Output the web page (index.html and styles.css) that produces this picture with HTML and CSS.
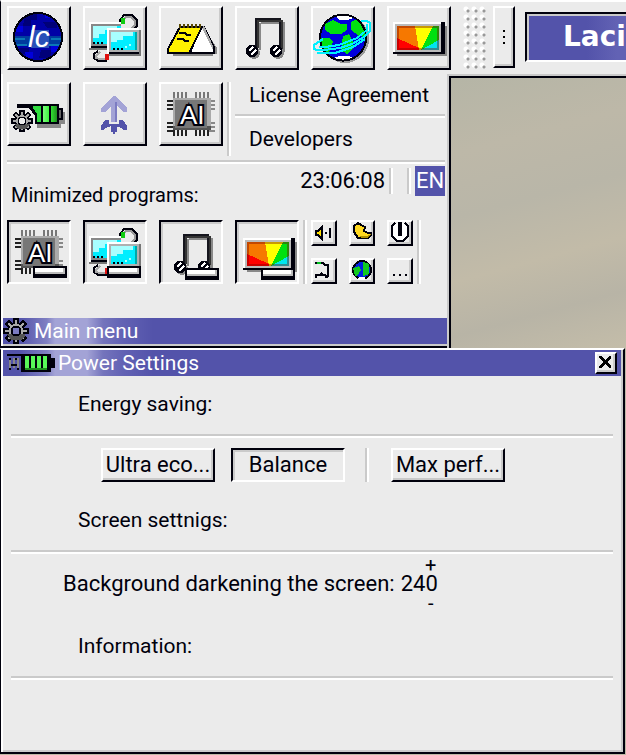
FILE: index.html
```html
<!DOCTYPE html>
<html lang="en">
<head>
<meta charset="utf-8">
<title>Main menu</title>
<link rel="stylesheet" href="styles.css">
</head>
<body>
<svg class="defs" aria-hidden="true">
  <defs>
    <linearGradient id="battery" x1="0" x2="1" y1="0" y2="0">
      <stop offset="0" stop-color="#7dff7d"/><stop offset=".5" stop-color="#35f035"/><stop offset="1" stop-color="#209020"/>
    </linearGradient>
    <clipPath id="disc"><circle cx="14.5" cy="14.5" r="12"/></clipPath>
    <clipPath id="earth"><circle cx="15" cy="14.8" r="11.5"/></clipPath>

    <symbol id="i-logo" viewBox="0 0 30 30">
      <g clip-path="url(#disc)">
        <path fill="#0000a6" d="M2 2h25v25H2z"/>
        <path fill="#000078" d="M8 3h6v3h-3v3H7zM17 7h7v3h-5zM5 20h5v3h-4zM16 21h5v4h-6z"/>
        <path fill="#0000dc" d="M4 9h3v3H3zM8 22h4v3H9zM21 19h4v3h-4zM18 3h3v2h-3z"/>
        <path fill="#003c9e" d="M2 14h25v5H2z"/>
        <path fill="#0a78b4" d="M2 15h6v1H2zM21 15h6v1h-6zM4 18h5v1H4zM20 18h5v1h-5z"/>
        <path fill="#2850b8" d="M11 11h9v9h-9z"/>
      </g>
      <circle cx="14.5" cy="14.5" r="12" fill="none" stroke="#00000c"/>
      <text class="logo-text" x="9.500" y="19.500">lc</text>
    </symbol>

    <symbol id="i-network" viewBox="0 0 30 30">
      <path fill="none" stroke="#00000c" d="M17.500 9V6l2-2.500h4l2.500 2.500v3l-2 2"/>
      <path fill="none" stroke="#999" d="M19 6l1.500-1.500h2.500l2 2v2l-2 2"/>
      <path fill="#fff" d="M2 7h16v13H2z"/>
      <path fill="#888" d="M3 8h15v11H3z"/>
      <path fill="#00eeff" d="M4 9h14v9H4z"/>
      <path fill="#a8ffff" d="M4 9h12v2H4zM4 11h6v2H4zM4 13h3v2H4z"/>
      <path fill="#00000c" d="M4 17h1v1H4zM6 17h1v1H6zM8 17h1v1H8zM3 19h9v1H3z"/>
      <path fill="#777" d="M2 20h9v1H2z"/>
      <path fill="none" stroke="#00000c" d="M6.500 21.500l-2 1.500v2l2 1.500h4l1-2"/>
      <path fill="none" stroke="#aaa" d="M7.500 22l-2 2v1l2 .5h3"/>
      <path fill="#e01010" d="M10 23h2v3h-2z"/>
      <path fill="#777" d="M12 11h16v13H12z"/>
      <path fill="#00000c" d="M12 22h15v1H12z"/>
      <path fill="#fff" d="M11 10h16v1H12v12h-1z"/>
      <path fill="#b0b0b0" d="M12 11h15v11H12z"/>
      <path fill="#00a8a8" d="M13 12h13v9H13z"/>
      <path fill="#00eeff" d="M13 12h12v9H13z"/>
      <path fill="#a8ffff" d="M13 12h11v2H13zM13 14h6v2h-6zM13 16h3v1h-3zM22 18h1v1h-1zM20 19h1v1h-1z"/>
      <path fill="#00000c" d="M14 20h1v1h-1zM16 20h1v1h-1zM18 20h1v1h-1z"/>
      <path fill="none" stroke="#00000c" d="M17.500 7V6l2-2.500"/>
      <path fill="#11cc11" d="M18 5h2v3h-2z"/>
    </symbol>

    <symbol id="i-notes" viewBox="0 0 30 30">
      <path fill="#888" d="M6 22h20v2H6zM22 11l6 9v3h-3z"/>
      <path fill="#fff" stroke="#00000c" d="M19.500 9.500h2l5 10v3h-12z"/>
      <path fill="#aaa" d="M20 9h1.500l4.500 10v2z"/>
      <path fill="#fff100" stroke="#00000c" d="M9.500 9.500h11L14 22.500H3.500v-2z"/>
      <path fill="none" stroke="#5c4a00" stroke-width="2" stroke-dasharray="1 1" d="M9 9h12"/>
      <path fill="none" stroke="#00000c" d="M9 12.500h3l1 1h2M8 15.500h3l1 1h2"/>
    </symbol>

    <symbol id="i-music" viewBox="0 0 30 30">
      <path fill="none" stroke="#888" stroke-width="1" d="M11.500 21V7.500M23.500 7v15M12 7.500h9"/>
      <path fill="none" stroke="#15151d" d="M9.500 21V5.500h12v15.500"/>
      <path fill="none" stroke="#333" d="M10 6.500h12M22.500 6v15M10.500 6v14"/>
      <g id="note-head">
        <ellipse cx="8.500" cy="22.500" rx="3" ry="3" fill="#888"/>
        <ellipse cx="7.500" cy="21.500" rx="3" ry="3.200" fill="#00000c"/>
        <path fill="none" stroke="#fff" d="M6 21.500l2-2M7 23.500l2.500-2.500"/>
      </g>
      <use href="#note-head" x="12"/>
    </symbol>

    <symbol id="i-globe" viewBox="0 0 30 30">
      <circle cx="16" cy="15.500" r="12" fill="#999"/>
      <g clip-path="url(#earth)">
        <path fill="#0000dd" d="M3 2h25v26H3z"/>
        <path fill="#fff" d="M10 2h10v3l-3 1h-4zM8 26l5-2h5l4 2v3H8z"/>
        <path fill="#00e010" d="M6 8l4-2 4 2h3v3l-3 2H9L6 11zM19 7l4-2 5 4v6l-5-1-4-3zM4 15h4l2 2-2 5H4zM15 14l3-1 2 4v3l-3 3-3-2z"/>
      </g>
      <circle cx="15" cy="14.800" r="11.500" fill="none" stroke="#00000c"/>
      <path fill="none" stroke="#00f0ff" d="M24 6.500h3l1.500 1v4l-3 3-6 3.500-6 2-8 1H2l-1.500-.5v-2L5 15.500M27 8v3l-5 4-9 3.500-7 1H3M2 22.500h9l9-3 6-4"/>
    </symbol>

    <symbol id="i-display" viewBox="0 0 30 30">
      <path fill="#888" d="M4 9h25v15H4z"/>
      <path fill="#00000c" d="M3 7h25v16H2v-1z"/>
      <path fill="#fff" d="M2 7h24v15H2z"/>
      <path fill="#bbb" d="M3 8h23v14H3z"/>
      <path fill="#f67800" d="M4 9h21v12H4z"/>
      <path fill="#f00" d="M4 15l11 5v1H4z"/>
      <path fill="#ff0" d="M13 9h9l-6 12h-1z"/>
      <path fill="#00e010" d="M22 9h3v7l-9 5z"/>
      <path fill="#00e5ee" d="M25 16v5h-9z"/>
      <path fill="none" stroke="#780000" stroke-opacity=".4" d="M4 20.500h21M4.500 9v12M4 9.500h21M24.500 9v12"/>
    </symbol>

    <symbol id="i-gear" viewBox="0 0 13 13">
      <path fill="#aaa" stroke="#00000c" d="M5.500.5h2v2l1 .5L10 1.500 11.500 3 10 4.500l.5 1h2v2h-2l-.5 1 1.500 1.500L10 11.500 8.500 10l-1 .5v2h-2v-2l-1-.5L3 11.500 1.500 10 3 8.500l-.5-1h-2v-2h2l.5-1L1.500 3 3 1.500 4.500 3l1-.5z"/>
      <path fill="#555" d="M2 8h9v1L9 11H4z"/>
      <circle class="hub" cx="6.500" cy="6.500" r="2.200" stroke="#00000c"/>
    </symbol>

    <symbol id="i-power" viewBox="0 0 30 30">
      <path fill="#888" d="M14 14h14v6h-2v2H14z"/>
      <path fill="#00000c" d="M4 10h21v2h2v6h-2v2H13v-4l-3-4H4z"/>
      <path fill="#30dc40" d="M12 11h4v8h-2v-4l-2-3z"/>
      <path fill="url(#battery)" d="M17 11h3v8h-3zM21 11h3v8h-3z"/>
      <path fill="#666" d="M25 13h1v4h-1z"/>
      <use href="#i-gear" x="1" y="13" width="11" height="11"/>
    </symbol>

    <symbol id="i-arrow" viewBox="0 0 30 30">
      <path fill="#a3a3d6" d="M14 6h1l6 6v2h-2l-3-3v8h-3v-8l-3 3H8v-2z"/>
      <path fill="#7c7cc2" d="M15 9h1v10h-1z"/>
      <path fill="#5353aa" d="M10 18h2v2h2l-1 1-3 1-1 1H8v-2zM17 18h2l2 3v2h-2l-1-1-3-1-1-1h3zM13 21l1-1h1l1 1v3h-1v1h-1v-1h-1z"/>
    </symbol>

    <symbol id="i-chip" viewBox="0 0 30 30">
      <path fill="none" stroke="#222" stroke-width="3" stroke-dasharray="1 1" d="M6 24.500h7M17 24.500h8"/>
      <path fill="none" stroke="#777" stroke-width="3" stroke-dasharray="1 1" d="M6 5.500h7M17 5.500h8"/>
      <path fill="none" stroke="#222" stroke-width="3" stroke-dasharray="1 1" d="M4.500 8v6M4.500 19v5"/>
      <path fill="none" stroke="#888" stroke-width="3" stroke-dasharray="1 1" d="M25.500 8v6M25.500 19v5"/>
      <path fill="#aaa" d="M6 7h19v16H6z"/>
      <path fill="#555" d="M6 21h19v2H6z"/>
      <path fill="#777" d="M7 8h16v14H7z"/>
      <text class="chip-text" x="9.500" y="20">AI</text>
    </symbol>

    <symbol id="i-bar" viewBox="0 0 17 6">
      <path fill="#00000c" d="M0 0h17v6H0z"/><path fill="#bbb" d="M1 1h15v3H1z"/><path fill="#fff" d="M1 1h14v2H1z"/>
    </symbol>
  </defs>
</svg>

<header class="toolbar">
  <button class="tile" aria-label="Lacia"><svg class="icon"><use href="#i-logo"/></svg></button>
  <button class="tile" aria-label="Network"><svg class="icon"><use href="#i-network"/></svg></button>
  <button class="tile" aria-label="Notes"><svg class="icon"><use href="#i-notes"/></svg></button>
  <button class="tile" aria-label="Music"><svg class="icon"><use href="#i-music"/></svg></button>
  <button class="tile" aria-label="Internet"><svg class="icon"><use href="#i-globe"/></svg></button>
  <button class="tile" aria-label="Display"><svg class="icon"><use href="#i-display"/></svg></button>
  <div class="grip"></div>
  <button class="more" aria-label="More"><svg class="more-dots" viewBox="0 0 2 14"><path d="M0 0h2v2H0zM0 6h2v2H0zM0 12h2v2H0z"/></svg></button>
  <div class="banner">Lacia</div>
</header>

<div class="upper">
  <nav class="menu">
    <div class="row">
      <div class="tiles">
        <button class="tile" aria-label="Power"><svg class="icon"><use href="#i-power"/></svg></button>
        <button class="tile" aria-label="Update"><svg class="icon"><use href="#i-arrow"/></svg></button>
        <button class="tile" aria-label="AI"><svg class="icon"><use href="#i-chip"/></svg></button>
      </div>
      <div class="vline"></div>
      <div class="links">
        <a href="#license">License Agreement</a>
        <hr class="line">
        <a href="#developers">Developers</a>
      </div>
    </div>
    <hr class="line">
    <div class="status">
      <h2 class="label">Minimized programs:</h2>
      <div class="clock">
        <time>23:06:08</time>
        <div class="vline"></div>
        <div class="vline"></div>
        <button class="lang">EN</button>
      </div>
    </div>
    <div class="minimized">
      <div class="tiles">
        <button class="tile pressed" aria-label="AI"><svg class="icon" viewBox="0 0 30 30"><use href="#i-chip"/><use href="#i-bar" x="12" y="22" width="17" height="6"/></svg></button>
        <button class="tile pressed" aria-label="Network"><svg class="icon" viewBox="0 0 30 30"><use href="#i-network"/><use href="#i-bar" x="11" y="22" width="17" height="6"/></svg></button>
        <button class="tile pressed" aria-label="Music"><svg class="icon" viewBox="0 0 30 30"><use href="#i-music" x="2" y="1" width="30" height="30"/><use href="#i-bar" x="12" y="23" width="17" height="6"/></svg></button>
        <button class="tile pressed" aria-label="Display"><svg class="icon" viewBox="0 0 30 30"><use href="#i-display" x="1" y="1" width="30" height="30"/><use href="#i-bar" x="12" y="23" width="17" height="6"/></svg></button>
      </div>
      <div class="vline"></div>
      <div class="tray">
        <button class="mini" aria-label="Volume"><svg viewBox="0 0 11 11"><path fill="#ffe000" stroke="#00000c" d="M1.500 4.500h1l2-2v6l-2-2h-1z"/><path fill="#00000c" d="M6 5h1v1H6zM8 3h1v5H8z"/></svg></button>
        <button class="mini" aria-label="Night mode"><svg viewBox="0 0 11 11"><path fill="#ffd820" stroke="#00000c" d="M3.500.5L1.500 2v3l2 3h5l1.500-1.500v-1H8.500l-2-1 .5-2-2-1z"/><path fill="#b09000" d="M4 7h4l2-1-2 2H5z"/></svg></button>
        <button class="mini" aria-label="Power off"><svg viewBox="0 0 11 11"><path fill="#fff" stroke="#00000c" d="M3 .5L1.500 2v5L4 9.500h3L9.500 7V2L8 .5"/><path fill="#00000c" d="M4.500 0h2v7h-2z"/></svg></button>
        <button class="mini" aria-label="Connection"><svg viewBox="0 0 11 11"><path fill="none" stroke="#00000c" d="M1 1.500h4l1 1h1.500v6M1.500 9V7.500h2l1-1M4 7.500h2l1 1.500"/><path fill="#00c020" d="M2 1h2v1H2z"/></svg></button>
        <button class="mini" aria-label="Internet"><svg viewBox="0 0 11 11"><circle cx="5.500" cy="5" r="4.500" fill="#0020e0" stroke="#00000c"/><path fill="#10c820" d="M1 4l3-1 1 2-2 3H2zM6 1l3 1v5L6 8z"/><path fill="#fff" d="M4 8.500h3V10H3z"/></svg></button>
        <button class="mini" aria-label="More icons"><svg viewBox="0 0 11 11"><path fill="#00000c" d="M2 7h1v1H2zM5 7h1v1H5zM8 7h1v1H8z"/></svg></button>
      </div>
      <div class="vline"></div>
    </div>
    <div class="titlebar">
      <svg class="title-gear"><use href="#i-gear"/></svg>
      <h1 class="title">Main menu</h1>
    </div>
  </nav>
  <div class="desktop"></div>
</div>

<main class="window">
  <div class="titlebar">
    <svg class="title-battery" viewBox="0 0 24 9"><path fill="#00000c" d="M0 0h22v2h2v5h-2v2H7V1H0z"/><path fill="none" stroke="#888" stroke-width="5" stroke-dasharray="1 1" d="M1 4.500h6"/><path fill="none" stroke="#00000c" d="M1 2.500h1m2 0h1M2 5.500h3M1 7.500h1m3 0h1"/><path fill="#58f858" d="M9 1h2v6H9zM12 1h2v6h-2zM15 1h2v6h-2zM18 1h2v6h-2z"/><path fill="#209020" d="M9 7h11v1H9z"/></svg>
    <h1 class="title">Power Settings</h1>
    <button class="close" aria-label="Close"><svg viewBox="0 0 6 6"><path d="M0 0h1l2 2 2-2h1v1L4 3l2 2v1H5L3 4 1 6H0V5l2-2-2-2z"/></svg></button>
  </div>
  <section class="group">
    <h2 class="heading">Energy saving:</h2>
    <hr class="line">
    <div class="modes">
      <button class="mode">Ultra eco...</button>
      <button class="mode pressed">Balance</button>
      <div class="vline"></div>
      <button class="mode">Max perf...</button>
    </div>
  </section>
  <section class="group">
    <h2 class="heading">Screen settnigs:</h2>
    <hr class="line">
    <div class="darkening">
      <span>Background darkening the screen:</span>
      <div class="stepper">
        <button class="step" aria-label="Increase">+</button>
        <output>240</output>
        <button class="step" aria-label="Decrease">-</button>
      </div>
    </div>
  </section>
  <section class="group">
    <h2 class="heading">Information:</h2>
    <hr class="line">
  </section>
</main>
</body>
</html>
```
FILE: styles.css
```css
:root {
  --face: #ebebeb;
  --shade: #cacaca;
  --ink: #00000c;
  --blue: #5353aa;
}

* { box-sizing: border-box; }

body {
  margin: 0;
  min-height: 100vh;
  display: flex;
  flex-direction: column;
  background: #bfb9a6;
  color: var(--ink);
  font: 22px/26px Roboto, "Liberation Sans", sans-serif;
  white-space: nowrap;
  overflow-x: hidden;
}

h1, h2 { margin: 0; font: inherit; }
button { padding: 0; font: inherit; color: inherit; background: var(--face); border: 0; }
a { color: inherit; text-decoration: none; }
svg { display: block; shape-rendering: crispEdges; }
.defs { position: absolute; width: 0; height: 0; }

.logo-text { font: italic 15px "Liberation Sans", sans-serif; fill: #fff; }
.chip-text { font: 13px "Liberation Sans", sans-serif; fill: #fff; stroke: var(--ink); stroke-width: 2px; paint-order: stroke; }
.hub { fill: var(--face); }
.title-gear { --face: #7c7cc2; }

/* Raised and sunken bevels */
.tile, .mini, .more, .mode, .close {
  border: 2px solid;
  border-color: #fff var(--ink) var(--ink) #fff;
  box-shadow: inset -2px -2px var(--shade);
}
.tile.pressed, .mode.pressed {
  border-color: var(--ink) #fff #fff var(--ink);
  box-shadow: inset 2px 2px var(--shade);
}

.line { width: 100%; height: 4px; margin: 0; border: 0; border-top: 2px solid var(--shade); background: #fff; }
.vline { width: 4px; align-self: stretch; border-left: 2px solid var(--shade); background: #fff; }

.tile { flex: none; width: 64px; height: 64px; }
.icon { width: 60px; height: 60px; }
.tiles { display: flex; gap: 12px; }

/* Toolbar */
.toolbar {
  display: flex;
  gap: 12px;
  padding: 4px 0 4px 6px;
  border-top: 2px solid #fff;
  border-left: 1px solid var(--ink);
  background:
    linear-gradient(90deg, transparent 304px, #7a3c14 304px 352px, #1c1418 352px 545px, transparent 545px) 0 0 / 100% 1px no-repeat border-box,
    var(--face);
  overflow: hidden;
}
.grip {
  flex: none;
  width: 24px;
  height: 64px;
  background:
    radial-gradient(circle at 5px 5px, #999 0 1px, transparent 2px) 0 0 / 8px 8px,
    radial-gradient(circle at 3px 3px, #fff 0 2px, transparent 3px) 0 0 / 8px 8px;
}
.more { flex: none; display: grid; place-items: center; width: 22px; height: 62px; margin-left: -6px; }
.more-dots { width: 2px; height: 14px; }
.banner {
  flex: 1 0 auto;
  height: 50px;
  margin: 6px 0 0 -2px;
  padding-left: 36px;
  border: 2px solid;
  border-color: var(--ink) #fff #fff var(--ink);
  box-shadow: inset 2px 2px var(--shade);
  background: linear-gradient(90deg, var(--blue) 60px, #6262b4 90px);
  color: #fff;
  font: bold 28px/46px "DejaVu Sans", sans-serif;
}

/* Menu panel beside the desktop */
.upper { display: grid; grid-template-columns: 447fr 179fr; }
.menu {
  border-left: 1px solid var(--ink);
  border-bottom: 2px solid var(--ink);
  box-shadow: inset 2px 0 #fff, inset 0 -2px var(--shade);
  padding: 8px 0 2px 2px;
  background: var(--face);
}
.desktop {
  border: solid var(--shade);
  border-width: 2px 0 0 2px;
  box-shadow: inset 2px 2px var(--ink);
  background: linear-gradient(165deg, #b5b5a6 0%, #bdb8a8 25%, #b9b6a8 45%, #c2bba8 65%, #b8b4a6 82%, #c4bda9 100%);
}
.row { display: flex; gap: 4px; padding: 0 2px 0 4px; }
.links { flex: 1; padding-bottom: 4px; font-size: 21px; }
.links a { display: block; padding-left: 14px; }
.links .line { margin: 6px 0 8px; }
.menu > .line { width: auto; margin: 4px 2px 0 4px; }

.status { display: flex; justify-content: space-between; padding: 2px 2px 0 8px; }
.label { padding-top: 16px; font-size: 20px; }
.clock { display: flex; gap: 4px; height: 30px; }
.clock .vline { margin: 2px 0; }
.clock .vline + .vline { margin-left: 10px; }
.clock time { line-height: 30px; }
.lang { width: 30px; background: var(--blue); color: #fff; }

.minimized { display: flex; gap: 4px; padding: 12px 4px 34px; }
.tray { display: grid; grid-template-columns: repeat(3, 26px); gap: 12px; }
.mini { width: 26px; height: 26px; }
.mini svg { width: 22px; height: 22px; }

.titlebar {
  display: flex;
  align-items: center;
  height: 26px;
  background: linear-gradient(90deg, var(--blue) 16px, #8080c2 44px, #a3a3d6 52px, #a3a3d6 84px, #7474bc 100px, #6262b4 120px, var(--blue) 150px);
}
.title { color: #fff; font-size: 21px; }
.title-gear { width: 26px; height: 26px; margin-right: 5px; }
.title-battery { width: 48px; height: 18px; margin: 0 3px 0 4px; }
.close { display: grid; place-items: center; width: 22px; height: 22px; margin: 0 4px 0 auto; }
.close svg { width: 12px; height: 12px; margin: 0 2px 2px 0; }

/* Power settings window */
.window {
  flex: 1;
  margin: 0 1px 1px 0;
  padding: 0 2px 2px 2px;
  border: solid var(--ink);
  border-width: 0 2px 2px 1px;
  border-top: 2px solid #fff;
  box-shadow: inset 2px 0 #fff, inset -2px -2px var(--shade);
  background: var(--face);
}
.group { padding: 15px 8px 10px; }
.heading { padding: 0 67px 17px; font-size: 21px; }
.modes { display: flex; gap: 16px; padding: 10px 90px 0; }
.mode { width: 114px; height: 34px; line-height: 30px; }
.modes .vline { margin: 0 6px 0 4px; }
.darkening { display: flex; align-items: center; gap: 6px; padding: 4px 52px 0; }
.stepper { display: flex; flex-direction: column; align-items: flex-end; line-height: 24px; }
.step { width: 14px; height: 14px; font-size: 20px; line-height: 14px; background: none; }
.group + .group { padding-bottom: 8px; }
```
